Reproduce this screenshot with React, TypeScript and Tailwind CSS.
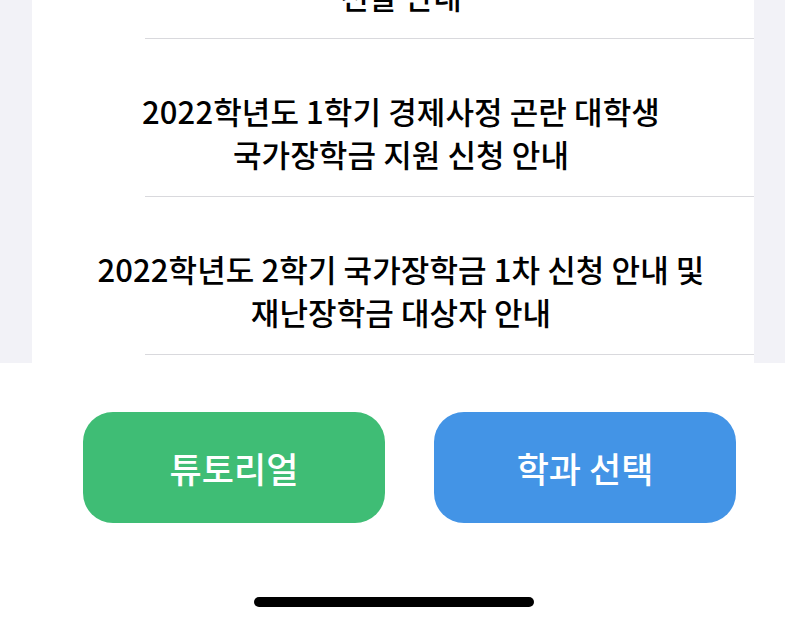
const notices = [
  ['2022학년도 2학기 교내 성적우수 장학생', '선발 안내'],
  ['2022학년도 1학기 경제사정 곤란 대학생', '국가장학금 지원 신청 안내'],
  ['2022학년도 2학기 국가장학금 1차 신청 안내 및', '재난장학금 대상자 안내'],
];

export default function App() {
  return (
    <div
      className="w-[785px] h-[624px] flex flex-col bg-white overflow-hidden"
      style={{ fontFamily: '"Noto Sans CJK KR", "Noto Sans", sans-serif' }}
    >
      {/* notice list (scrolled) */}
      <div className="h-[363px] bg-[#f2f2f7] pl-8 pr-[31px] overflow-hidden">
        <div className="bg-white h-full overflow-hidden">
          <div className="-mt-[119px]">
            {notices.map((lines, i) => (
              <div key={i}>
                <div className="pl-4 pt-[50px] pb-[21px] text-center text-[31px] leading-[43px] tracking-[0.1px] font-medium text-black whitespace-nowrap">
                  <div>{lines[0]}</div>
                  <div>{lines[1]}</div>
                </div>
                <div className="ml-[113px] h-px bg-[#d9d9dd]" />
              </div>
            ))}
          </div>
        </div>
      </div>

      {/* bottom actions */}
      <div className="flex-1 flex flex-col">
        <div className="flex gap-[49px] pl-[83px] pt-[49px]">
          <button className="w-[302px] h-[111px] rounded-[30px] bg-[#3fbd75] text-white text-[35px] leading-none font-medium">
            튜토리얼
          </button>
          <button className="w-[302px] h-[111px] rounded-[30px] bg-[#4394e6] text-white text-[35px] leading-none font-medium">
            학과 선택
          </button>
        </div>
        <div className="mt-[74px] ml-[254px] w-[280px] h-[10px] rounded-full bg-black" />
      </div>
    </div>
  );
}
